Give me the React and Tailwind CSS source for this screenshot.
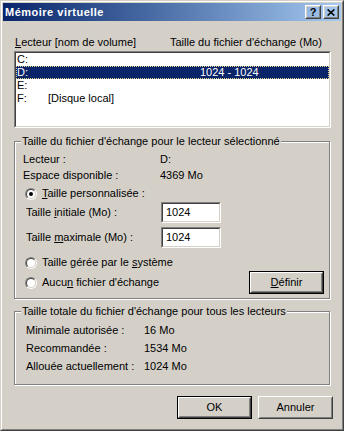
import React from 'react';

function Raised({ className = '', innerClassName = '', children, isDefault }) {
  if (isDefault) {
    return (
      <div className={`border border-black ${className}`}>
        <div className={`h-full w-full border border-t-white border-l-white border-r-[#404040] border-b-[#404040] ${innerClassName}`}>
          <div className="h-full w-full border border-t-[#D4D0C8] border-l-[#D4D0C8] border-r-[#808080] border-b-[#808080] flex items-center justify-center">
            {children}
          </div>
        </div>
      </div>
    );
  }
  return (
    <div className={`border border-t-white border-l-white border-r-[#404040] border-b-[#404040] ${className}`}>
      <div className={`h-full w-full border border-t-[#D4D0C8] border-l-[#D4D0C8] border-r-[#808080] border-b-[#808080] flex items-center justify-center ${innerClassName}`}>
        {children}
      </div>
    </div>
  );
}

function Sunken({ className = '', children }) {
  return (
    <div className={`border border-t-[#808080] border-l-[#808080] border-r-white border-b-white ${className}`}>
      <div className="h-full w-full border border-t-[#404040] border-l-[#404040] border-r-[#D4D0C8] border-b-[#D4D0C8] bg-white">
        {children}
      </div>
    </div>
  );
}

function Radio({ checked }) {
  return (
    <div className="w-[12px] h-[12px] rounded-full border border-t-[#808080] border-l-[#808080] border-r-white border-b-white shrink-0">
      <div className="w-full h-full rounded-full border border-t-[#404040] border-l-[#404040] border-r-[#D4D0C8] border-b-[#D4D0C8] bg-white flex items-center justify-center">
        {checked ? <div className="w-[4px] h-[4px] rounded-full bg-black" /> : null}
      </div>
    </div>
  );
}

function GroupBox({ title, className = '', bodyClassName = '', children }) {
  return (
    <fieldset className={`w-[316px] border border-[#808080] shadow-[inset_1px_1px_0_#fff,1px_1px_0_#fff] ${className}`}>
      <legend className="ml-[6px] px-[1px] bg-[#D4D0C8] leading-[13px]">{title}</legend>
      <div className={bodyClassName}>{children}</div>
    </fieldset>
  );
}

const drives = [
  { letter: 'C:', label: '', size: '' },
  { letter: 'D:', label: '', size: '1024 - 1024', selected: true },
  { letter: 'E:', label: '', size: '' },
  { letter: 'F:', label: '[Disque local]', size: '' },
];

export default function App() {
  return (
    <div className="w-[344px] h-[431px] bg-[#D4D0C8] border border-t-[#D4D0C8] border-l-[#D4D0C8] border-r-[#404040] border-b-[#404040] font-['Liberation_Sans',Arial,sans-serif] text-[11px] leading-[13px] text-black select-none">
      <div className="h-full border border-t-white border-l-white border-r-[#808080] border-b-[#808080] p-px flex flex-col">
        {/* title bar */}
        <div className="h-[18px] shrink-0 bg-linear-to-r from-[#0A246A] to-[#A6CAF0] flex items-center pl-[2px] pr-[2px]">
          <div className="flex-1 text-white font-bold tracking-[0.5px]">Mémoire virtuelle</div>
          <div className="flex gap-[2px]">
            <Raised className="w-[16px] h-[14px]">
              <span className="font-bold text-[11px] leading-none">?</span>
            </Raised>
            <Raised className="w-[16px] h-[14px]">
              <svg width="8" height="7" viewBox="0 0 8 7">
                <path d="M0.6 0.5L7.4 6.5M7.4 0.5L0.6 6.5" stroke="black" strokeWidth="1.6" />
              </svg>
            </Raised>
          </div>
        </div>

        {/* content */}
        <div className="pl-[11px] pr-[10px]">
          <div className="mt-[15px] flex pl-[1px]">
            <div className="w-[155px]"><u>L</u>ecteur [nom de volume]</div>
            <div>Taille du fichier d'échange (Mo)</div>
          </div>

          <Sunken className="mt-[2px] h-[77px]">
            {drives.map((d) => (
              <div
                key={d.letter}
                className={`h-[13px] grid grid-cols-[31px_152px_1fr] pl-px ${d.selected ? 'bg-[#0A246A] text-white outline outline-1 outline-dotted outline-[#E8D890] -outline-offset-1' : ''}`}
              >
                <span>{d.letter}</span>
                <span>{d.label}</span>
                <span>{d.size}</span>
              </div>
            ))}
          </Sunken>

          <GroupBox
            title="Taille du fichier d'échange pour le lecteur sélectionné"
            className="mt-[7px]"
            bodyClassName="pl-[8px] pr-[5px] pb-[4px]"
          >
            <div className="mt-[5px] grid grid-cols-[137px_1fr]">
              <span>Lecteur :</span>
              <span>D:</span>
            </div>
            <div className="mt-[3px] grid grid-cols-[137px_1fr]">
              <span>Espace disponible :</span>
              <span>4369 Mo</span>
            </div>
            <div className="mt-[5px] ml-[2px] flex items-center gap-[5px] h-[13px]">
              <Radio checked />
              <span><u>T</u>aille personnalisée :</span>
            </div>
            <div className="mt-[2px] ml-[3px] flex items-center">
              <span className="w-[135px]">Taille <u>i</u>nitiale (Mo) :</span>
              <Sunken className="w-[60px] h-[21px]">
                <div className="pl-[3px] pt-[2px]">1024</div>
              </Sunken>
            </div>
            <div className="mt-[4px] ml-[3px] flex items-center">
              <span className="w-[135px]">Taille <u>m</u>aximale (Mo) :</span>
              <Sunken className="w-[60px] h-[21px]">
                <div className="pl-[3px] pt-[2px]">1024</div>
              </Sunken>
            </div>
            <div className="mt-[8px] ml-[2px] flex items-center gap-[5px] h-[13px]">
              <Radio />
              <span>Taille gérée par le <u>s</u>ystème</span>
            </div>
            <div className="mt-[2px] ml-[2px] flex items-center justify-between h-[23px]">
              <div className="flex items-center gap-[5px]">
                <Radio />
                <span>Aucu<u>n</u> fichier d'échange</span>
              </div>
              <Raised isDefault className="w-[75px] h-[23px]">
                <span><u>D</u>éfinir</span>
              </Raised>
            </div>
          </GroupBox>

          <GroupBox
            title="Taille totale du fichier d'échange pour tous les lecteurs"
            className="mt-[6px]"
            bodyClassName="pl-[11px] pb-[11px]"
          >
            <div className="mt-[6px] flex flex-col gap-[5px]">
              <div className="grid grid-cols-[118px_1fr]">
                <span>Minimale autorisée :</span>
                <span>16 Mo</span>
              </div>
              <div className="grid grid-cols-[118px_1fr]">
                <span>Recommandée :</span>
                <span>1534 Mo</span>
              </div>
              <div className="grid grid-cols-[118px_1fr]">
                <span>Allouée actuellement :</span>
                <span>1024 Mo</span>
              </div>
            </div>
          </GroupBox>

          <div className="mt-[11px] -mr-[2px] flex justify-end gap-[6px]">
            <Raised isDefault className="w-[75px] h-[23px]">
              <span>OK</span>
            </Raised>
            <Raised className="w-[75px] h-[23px]">
              <span>Annuler</span>
            </Raised>
          </div>
        </div>
      </div>
    </div>
  );
}
